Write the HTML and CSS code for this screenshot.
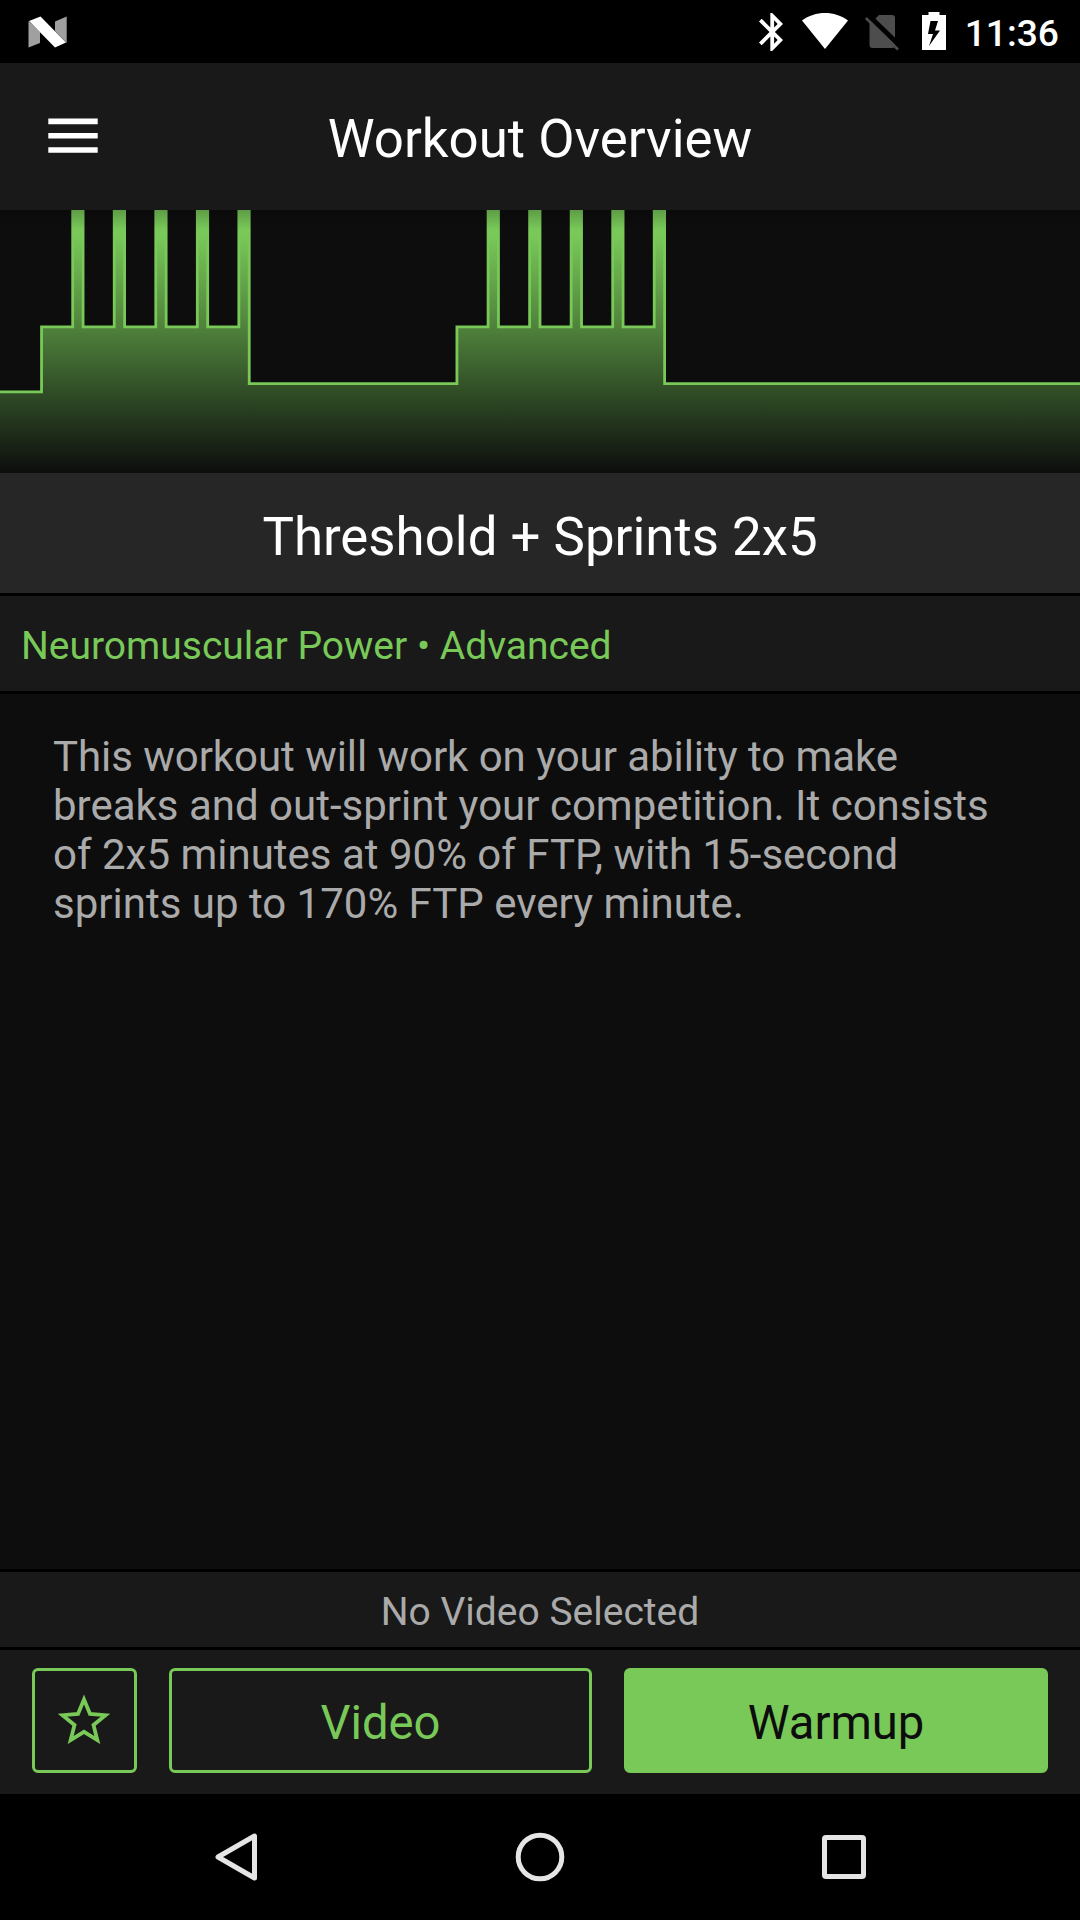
FILE: index.html
```html
<!DOCTYPE html>
<html lang="en">
<head>
<meta charset="utf-8">
<title>Workout Overview</title>
<link rel="stylesheet" href="styles.css">
</head>
<body>
<div class="screen">
  <div class="status">
    <svg class="nougat" width="40" height="32" viewBox="0 0 40 32"><path fill="#a0a0a0" d="M.5 5 12 16v11L.5 31.500zM27 5.500 38.700.500V27L27 15z"/><path fill="#fff" d="M1 5 12.500.500 38 26.500 27 31.500z"/></svg>
    <svg class="bluetooth" width="24" height="38" viewBox="5 2 12.710 20"><path fill="#fff" d="M17.710 7.710L12 2h-1v7.590L6.410 5 5 6.410 10.590 12 5 17.590 6.410 19 11 14.410V22h1l5.710-5.710-4.300-4.290 4.300-4.290zM13 5.830l1.880 1.880L13 9.590V5.830zm1.880 10.460L13 18.170v-3.760l1.880 1.880z"/></svg>
    <svg class="wifi" width="46" height="36" viewBox="0 0 46 36"><path fill="#fff" d="M0 7.500C13-2.500 33-2.500 46 7.500L23 36z"/></svg>
    <svg class="nosim" width="34" height="36" viewBox="0 0 34 36"><path fill="#4d4d4d" d="M4.500 5H9L14 0H27q3 0 3 3V30q0 3-3 3H7.500q-3 0-3-3z"/><path stroke="#000" stroke-width="5" d="M2-1 36 32"/><path stroke="#4d4d4d" stroke-width="2.600" d="M.8 3 33 34.500"/></svg>
    <svg class="battery" width="24" height="38" viewBox="0 0 24 38"><path fill="#fff" fill-rule="evenodd" d="M6.500 0H17.500V3H24V38H0V3H6.500zM8.500 9 6 22H11L7 34 18 18.500H13L16 9z"/></svg>
    <span class="clock">11:36</span>
  </div>
  <header class="header">
    <svg class="menu" width="50" height="36" viewBox="0 0 50 36"><path fill="#fff" d="M.3.500h49.400v5.700H.3zM.3 15h49.400v5.600H.3zM.3 29.300h49.400v5.500H.3z"/></svg>
    <h1>Workout Overview</h1>
  </header>
  <svg class="chart" width="1080" height="263" viewBox="0 210 1080 263">
    <defs>
      <linearGradient id="fill" gradientUnits="userSpaceOnUse" x1="0" y1="235" x2="0" y2="473">
        <stop offset="0" stop-color="#79c959"/><stop offset=".39" stop-color="#4f813b"/><stop offset=".66" stop-color="#304d26"/><stop offset="1" stop-color="#0d0d0d"/>
      </linearGradient>
      <linearGradient id="shade" x1="0" y1="0" x2="0" y2="1">
        <stop offset="0" stop-opacity=".22"/><stop offset="1" stop-opacity="0"/>
      </linearGradient>
    </defs>
    <path fill="url(#fill)" stroke="#79c959" stroke-width="2.800" d="M-5 480V391.900H41.540V326.900H72.690V197H83.080V326.900H114.230V197H124.620V326.900H155.770V197H166.150V326.900H197.310V197H207.690V326.900H238.850V197H249.230V383.600H456.920V326.900H488.080V197H498.460V326.900H529.620V197H540V326.900H571.150V197H581.540V326.900H612.690V197H623.080V326.900H654.230V197H664.620V383.600H1085V480z"/>
    <rect y="210" width="1080" height="20" fill="url(#shade)"/>
  </svg>
  <h2 class="name">Threshold + Sprints 2x5</h2>
  <div class="category">Neuromuscular Power • Advanced</div>
  <p class="description"><span class="tight">This workout will work on your ability to make</span><br>breaks and out-sprint your competition. It consists<br>of 2x5 minutes at 90% of FTP, with 15-second<br>sprints up to 170% FTP every minute.</p>
  <div class="video-state">No Video Selected</div>
  <div class="actions">
    <button class="favorite"><svg width="52" height="50" viewBox="0 0 52 50"><path fill="none" stroke="#79c959" stroke-width="3.800" d="M26 5.500 32 20 47.500 21.200 35.500 31 39.300 46 26 37.800 12.700 46 16.500 31 4.500 21.200 20 20z"/></svg></button>
    <button class="video">Video</button>
    <button class="primary">Warmup</button>
  </div>
  <nav class="nav">
    <svg width="46" height="52" viewBox="0 0 46 52"><path fill="none" stroke="#e5e5e5" stroke-width="5" stroke-linejoin="round" d="M41.500 4V46L5 25z"/></svg>
    <svg width="50" height="52" viewBox="0 0 50 52"><circle cx="25" cy="25" r="21.800" fill="none" stroke="#e5e5e5" stroke-width="5"/></svg>
    <svg width="46" height="52" viewBox="0 0 46 52"><rect x="3.500" y="5.500" width="39" height="39" rx="1.500" fill="none" stroke="#e5e5e5" stroke-width="5"/></svg>
  </nav>
</div>
</body>
</html>
```
FILE: styles.css
```css
* { box-sizing: border-box; }
body { margin: 0; background: #000; font-family: Roboto, sans-serif; }
h1, h2, p { margin: 0; font-weight: 400; }
svg { display: block; flex: none; }
.screen { width: 1080px; height: 1920px; display: flex; flex-direction: column; overflow: hidden; background: #0d0d0d; }
.status { height: 63px; flex: none; background: #000; display: flex; align-items: flex-start; padding: 0 21px 0 28px; }
.nougat { margin-top: 16px; }
.bluetooth { margin: 13px 0 0 691px; }
.wifi { margin: 13px 0 0 19px; }
.nosim { margin: 15px 0 0 17px; }
.battery { margin: 12px 0 0 23px; }
.clock { margin-left: auto; line-height: 67px; font-size: 37.2px; font-weight: 500; color: #fff; }
.header { height: 147px; flex: none; background: #191919; display: grid; grid-template-columns: 130px 1fr 130px; align-items: center; }
.menu { margin: -2px 0 0 48px; }
.header h1 { text-align: center; color: #fff; font-size: 52.8px; line-height: 60px; padding-top: 4px; }
.chart { background: #0d0d0d; }
.name { height: 123px; flex: none; background: #262626; border-bottom: 3px solid #000; color: #fff; text-align: center; font-size: 52.8px; line-height: 128px; }
.category { height: 98px; flex: none; background: #191919; border-bottom: 3px solid #000; color: #79c959; font-size: 39px; line-height: 100px; padding-left: 21px; }
.description { flex: 1; padding: 38px 53px; color: #aaa; font-size: 42px; line-height: 49px; white-space: nowrap; }
.tight { letter-spacing: -.05px; }
.video-state { height: 81px; flex: none; background: #191919; border: solid #000; border-width: 3px 0; color: #aaa; text-align: center; font-size: 39px; line-height: 80px; }
.actions { height: 144px; flex: none; background: #191919; display: grid; grid-template-columns: 105px 423px 424px; grid-template-rows: 105px; gap: 32px; padding: 18px 32px 21px; }
button { font: 47.2px/90px Roboto, sans-serif; margin: 0; padding: 5px 0 0; border: 3px solid #79c959; border-radius: 6px; background: transparent; color: #79c959; }
.favorite { display: flex; align-items: center; justify-content: center; padding: 0 1px 4px 0; }
.primary { background: #79c959; color: #0d0d0d; }
.nav { height: 126px; flex: none; background: #000; display: flex; align-items: flex-start; justify-content: space-between; padding: 38px 213px 0; }
```
